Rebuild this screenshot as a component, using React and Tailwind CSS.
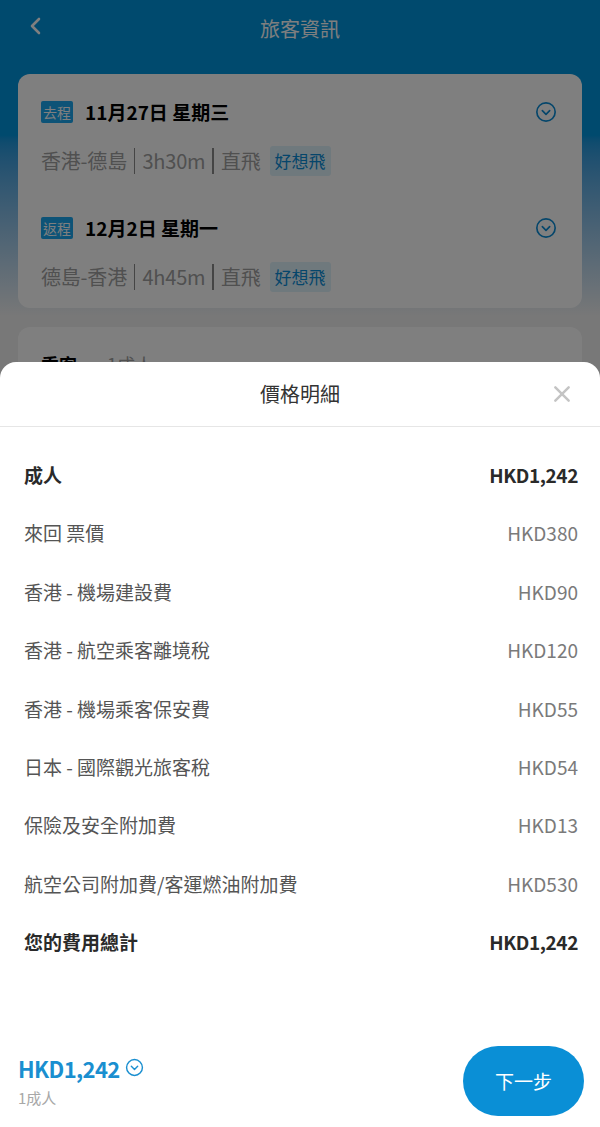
import React from 'react';

const font = { fontFamily: '"Noto Sans CJK TC", "Noto Sans", sans-serif' };

function CircleDown({ className }) {
  return (
    <svg viewBox="0 0 24 24" fill="none" stroke="currentColor" strokeWidth="1.8" strokeLinecap="round" strokeLinejoin="round" className={className}>
      <circle cx="12" cy="12" r="10" />
      <path d="M8 10.5l4 4 4-4" />
    </svg>
  );
}

function Sep() {
  return <span className="mx-[7px] w-[1.5px] h-[26px] bg-[#8a8a8a]" />;
}

function Segment({ badge, date, route, duration }) {
  return (
    <div className="flex flex-col">
      <div className="flex items-center h-[24px]">
        <span className="bg-[#1aa6ee] text-white text-[14px] leading-[22px] px-[2px] rounded-[2px]">{badge}</span>
        <span className="ml-[12px] text-[19px] font-bold text-black">{date}</span>
        <CircleDown className="ml-auto mr-[2px] w-[22px] h-[22px] text-[#0a8cd6]" />
      </div>
      <div className="flex items-center mt-[22px] h-[30px] text-[20px] text-[#a0a0a0] tracking-[-0.2px]">
        <span>{route}</span>
        <Sep />
        <span>{duration}</span>
        <Sep />
        <span>直飛</span>
        <span className="ml-[9px] bg-[#dff2fb] text-[#0a8cd6] text-[17px] leading-[30px] px-[5px] rounded-[3px] tracking-normal">好想飛</span>
      </div>
    </div>
  );
}

const rows = [
  ['來回 票價', 'HKD380'],
  ['香港 - 機場建設費', 'HKD90'],
  ['香港 - 航空乘客離境稅', 'HKD120'],
  ['香港 - 機場乘客保安費', 'HKD55'],
  ['日本 - 國際觀光旅客稅', 'HKD54'],
  ['保險及安全附加費', 'HKD13'],
  ['航空公司附加費/客運燃油附加費', 'HKD530'],
];

export default function App() {
  return (
    <div className="relative w-[600px] h-[1127px] overflow-hidden bg-[#f0f0f0]" style={font}>
      {/* page underneath */}
      <div className="bg-gradient-to-b from-[#0094dc] via-[#0094dc] via-[12%] to-[#f0f0f0] to-[28%] h-full">
        <div className="relative flex items-center justify-center h-[58px]">
          <svg viewBox="0 0 24 24" className="absolute left-[24px] top-[14px] w-[24px] h-[24px]" fill="none" stroke="#ffffff" strokeWidth="2.6" strokeLinecap="round" strokeLinejoin="round">
            <path d="M15 5l-7 7 7 7" />
          </svg>
          <span className="text-white text-[20px]">旅客資訊</span>
        </div>
        <div className="mx-[18px] mt-[16px] bg-white rounded-[12px] px-[23px] pt-[26px] pb-[16px]">
          <Segment badge="去程" date="11月27日 星期三" route="香港-德島" duration="3h30m" />
          <div className="h-[40px]" />
          <Segment badge="返程" date="12月2日 星期一" route="德島-香港" duration="4h45m" />
        </div>
        <div className="mx-[18px] mt-[19px] bg-white rounded-[12px] px-[23px] pt-[24px] h-[200px]">
          <span className="text-[18px] font-bold text-black">乘客</span>
          <span className="ml-[30px] text-[18px] text-[#a0a0a0]">1成人</span>
        </div>
      </div>

      {/* dim overlay */}
      <div className="absolute inset-0 bg-black/50" />

      {/* bottom sheet */}
      <div className="absolute left-0 right-0 bottom-0 top-[362px] bg-white rounded-t-[16px] flex flex-col">
        <div className="relative h-[65px] flex items-center justify-center border-b border-[#e6e6e6]">
          <span className="text-[20px] text-[#333333]">價格明細</span>
          <svg viewBox="0 0 24 24" className="absolute right-[28px] top-[22px] w-[20px] h-[20px]" fill="none" stroke="#c4c4c4" strokeWidth="3" strokeLinecap="round">
            <path d="M4 4l16 16M20 4L4 20" />
          </svg>
        </div>
        <div className="flex flex-col pl-[24px] pr-[22px] pt-[19px] text-[19px]">
          <div className="flex items-center justify-between h-[58.4px] font-bold text-[#2a2a2a]">
            <span>成人</span>
            <span className="tracking-[-0.4px]">HKD1,242</span>
          </div>
          {rows.map(([label, value]) => (
            <div key={label} className="flex items-center justify-between h-[58.4px]">
              <span className="text-[#555555]">{label}</span>
              <span className="text-[#7a7a7a]">{value}</span>
            </div>
          ))}
          <div className="flex items-center justify-between h-[58.4px] font-bold text-[#2a2a2a]">
            <span>您的費用總計</span>
            <span className="tracking-[-0.4px]">HKD1,242</span>
          </div>
        </div>
        <div className="mt-auto flex items-center justify-between pl-[18px] pr-[16px] pb-[11px]">
          <div className="flex flex-col">
            <div className="flex items-center">
              <span className="text-[22px] font-bold text-[#1a8fd0] leading-[30px] tracking-[-0.6px]">HKD1,242</span>
              <CircleDown className="ml-[5px] w-[19px] h-[19px] text-[#1a8fd0]" />
            </div>
            <span className="text-[15px] text-[#a8a8a8] mt-[4px]">1成人</span>
          </div>
          <button className="w-[121px] h-[70px] rounded-full bg-[#0a8fd6] text-white text-[19px]">下一步</button>
        </div>
      </div>
    </div>
  );
}
